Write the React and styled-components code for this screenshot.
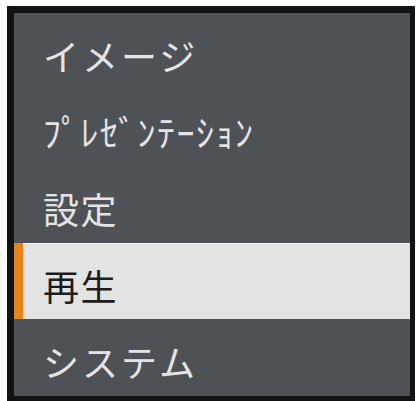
import React from "react";
import styled, { createGlobalStyle } from "styled-components";

const Global = createGlobalStyle`
  html, body { margin: 0; padding: 0; background: #ffffff; }
  body { font-family: "Noto Sans CJK JP", "Noto Sans", sans-serif; }
`;

const Frame = styled.div`
  box-sizing: border-box;
  margin: 6px 0 0 7px;
  width: 408px;
  height: 395px;
  border-style: solid;
  border-color: #121314;
  border-width: 7px 5px 5px 7px;
  background: #4e5256;
  display: flex;
  flex-direction: column;
`;

const Item = styled.div`
  flex: 1;
  display: flex;
  align-items: center;
  box-sizing: border-box;
  padding: 7px 0 0 29px;
  font-size: 36px;
  line-height: 1;
  letter-spacing: ${(p) => (p.$spaced ? "3px" : "1.5px")};
  color: ${(p) => (p.$selected ? "#1c1c1c" : "#e4e4e4")};
  background: ${(p) => (p.$selected ? "#e3e3e3" : "transparent")};
  box-shadow: ${(p) =>
    p.$selected ? "inset 9px 0 0 #e8821a, inset 0 1px 0 #f2f2f2" : "none"};
  white-space: nowrap;
`;

const items = [
  { label: "イメージ", spaced: true },
  { label: "ﾌﾟﾚｾﾞﾝﾃｰｼｮﾝ" },
  { label: "設定" },
  { label: "再生", selected: true },
  { label: "システム", spaced: true },
];

export default function App() {
  return (
    <>
      <Global />
      <Frame>
        {items.map((it) => (
          <Item key={it.label} $selected={it.selected} $spaced={it.spaced}>
            {it.label}
          </Item>
        ))}
      </Frame>
    </>
  );
}
